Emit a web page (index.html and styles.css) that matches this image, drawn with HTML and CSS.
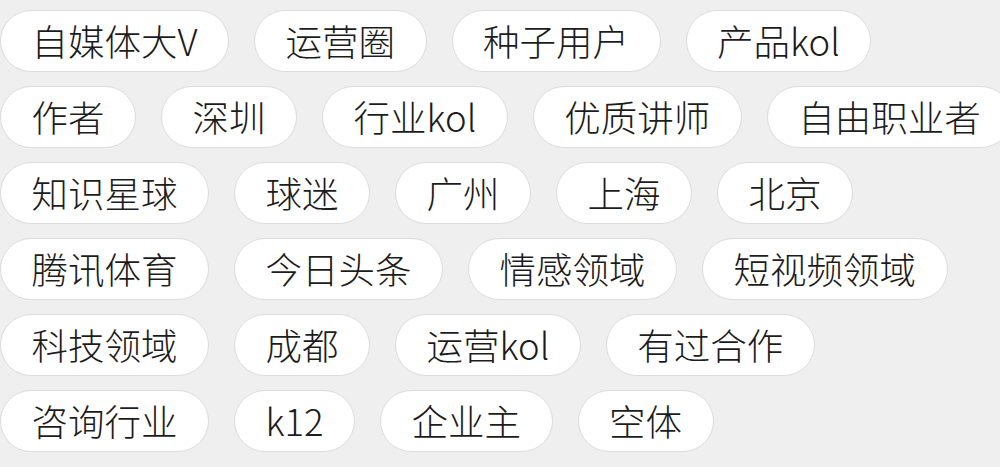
FILE: index.html
```html
<!DOCTYPE html>
<html lang="zh-CN">
<head>
<meta charset="UTF-8">
<title>标签</title>
<link rel="stylesheet" href="styles.css">
</head>
<body>

<div class="tags">
    <div class="row">
        <span class="tag">自媒体大V</span>
        <span class="tag">运营圈</span>
        <span class="tag">种子用户</span>
        <span class="tag">产品kol</span>
    </div>
    <div class="row">
        <span class="tag">作者</span>
        <span class="tag">深圳</span>
        <span class="tag">行业kol</span>
        <span class="tag">优质讲师</span>
        <span class="tag">自由职业者</span>
    </div>
    <div class="row">
        <span class="tag">知识星球</span>
        <span class="tag">球迷</span>
        <span class="tag">广州</span>
        <span class="tag">上海</span>
        <span class="tag">北京</span>
    </div>
    <div class="row">
        <span class="tag">腾讯体育</span>
        <span class="tag">今日头条</span>
        <span class="tag">情感领域</span>
        <span class="tag">短视频领域</span>
    </div>
    <div class="row">
        <span class="tag">科技领域</span>
        <span class="tag">成都</span>
        <span class="tag">运营kol</span>
        <span class="tag">有过合作</span>
    </div>
    <div class="row">
        <span class="tag">咨询行业</span>
        <span class="tag">k12</span>
        <span class="tag">企业主</span>
        <span class="tag">空体</span>
    </div>
</div>

</body>
</html>
```

FILE: styles.css
```css
html, body {
    margin: 0;
    height: 100%;
    overflow: hidden;
}
body {
    background: #efefef;
    font-family: "Noto Sans CJK SC", "Noto Sans", sans-serif;
    color: #1c1c1c;
}
.tags {
    display: flex;
    flex-direction: column;
    gap: 14px;
    padding: 10px 0 0 0;
}
.row {
    display: flex;
    gap: 25px;
    white-space: nowrap;
}
.tag {
    flex: none;
    height: 60px;
    padding: 0 30.5px;
    display: flex;
    align-items: center;
    background: #fff;
    border: 1px solid #dcdcdc;
    border-radius: 31px;
    font-size: 36.5px;
    font-weight: 300;
    line-height: 1;
}
```
